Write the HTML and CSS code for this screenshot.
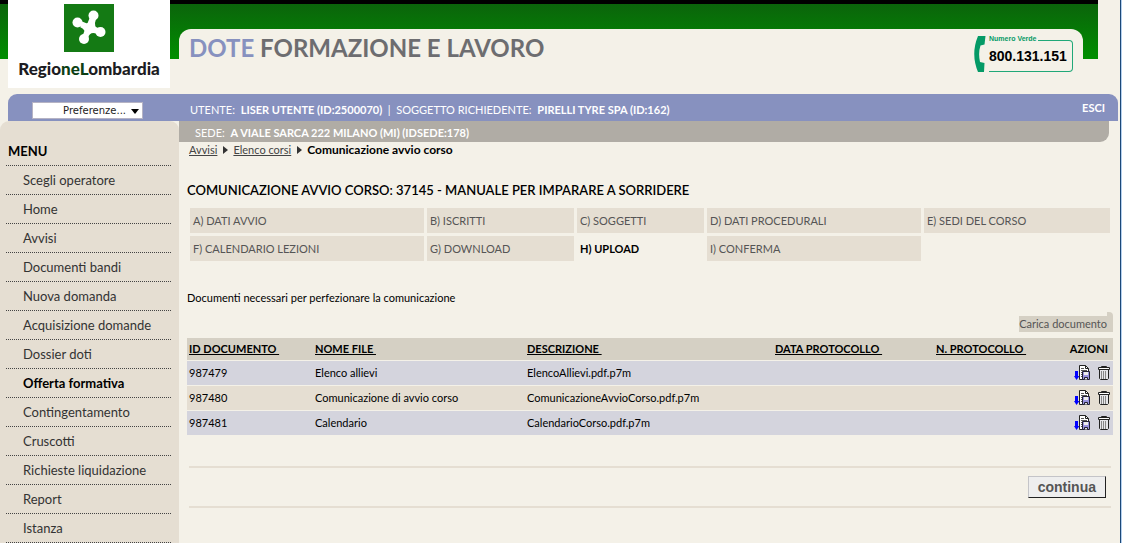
FILE: index.html
```html
<!DOCTYPE html>
<html lang="it">
<head>
<meta charset="utf-8">
<title>Dote Formazione e Lavoro</title>
<link rel="stylesheet" href="styles.css">
</head>
<body>
<svg class="symbols" aria-hidden="true">
  <symbol id="icon-save" viewBox="0 0 17 16">
    <path d="M5.500 14.500V.5h6l3 3v11z" fill="#fff" stroke="#222"/>
    <path d="M11.500.5v3h3" fill="none" stroke="#222"/>
    <path d="M7 3.500h3M7 5.500h6M7 7.500h1M7 9.500h1M7 11.500h1" stroke="#555"/>
    <path d="M8.500 6.500h7v8h-7z" fill="#9a94e0" stroke="#223"/>
    <path d="M10 7h4v3h-4z" fill="#eee"/>
    <path d="M10.500 14.500v-2h3v2" fill="#ddd" stroke="#223"/>
    <path d="M1 6h3v5h1.500L2.500 15 0 11h1z" fill="#00f"/>
  </symbol>
  <symbol id="icon-trash" viewBox="0 0 12 16">
    <path d="M1.500 4.500h9v9l-1 1h-7l-1-1z" fill="#e6e6ea" stroke="#222"/>
    <path d="M.5 2.500h11v2H.5z" fill="#fff" stroke="#222"/>
    <path d="M3.500 2.500v-1h5v1" fill="none" stroke="#222"/>
    <path d="M3.500 6v8M5.500 6v8M7.500 6v8" stroke="#888"/>
  </symbol>
</svg>
<div class="page">
  <header class="header">
    <a class="brand" href="#">
      <svg class="brand-mark" viewBox="0 0 50 48" aria-hidden="true">
        <path d="M0 0h50v48H0z" fill="#147a14"/>
        <g fill="#fff">
          <path d="M29.500 11 20 35M14 18.500l22.500 9" stroke="#fff" stroke-width="5"/>
          <path d="M18 21q7 0 9-8l5 2q-3 8 3 11l-2 4q-7-3-9 4l-4-2q3-6-4-9z"/>
          <circle cx="29.500" cy="11.500" r="5"/><circle cx="13.500" cy="18.500" r="5"/>
          <circle cx="36.500" cy="28" r="5"/><circle cx="20" cy="35" r="5"/>
        </g>
      </svg>
      <span class="brand-name">Regio<span class="brand-accent">neL</span>ombardia</span>
    </a>
    <div class="banner">
      <h1 class="title"><span class="title-accent">DOTE</span> FORMAZIONE E LAVORO</h1>
      <div class="hotline">
        <svg class="handset" viewBox="0 0 12 36" aria-hidden="true">
          <path d="M4 0h7.500l-1 8.500L6.500 9.500Q4 17 6 26l4.500 1-.5 9H4Q-3.500 18 4 0z" fill="#049a66"/>
        </svg>
        <div class="hotline-box">
          <span class="hotline-label">Numero Verde</span>
          <span class="hotline-number">800.131.151</span>
        </div>
      </div>
    </div>
  </header>

  <div class="userbar">
    <div class="prefs">
      <select class="prefs-select" aria-label="Preferenze"><option>Preferenze...</option></select>
      <svg class="prefs-arrow" viewBox="0 0 8 5" aria-hidden="true"><path d="M0 0h8L4 5z"/></svg>
    </div>
    <p class="user">UTENTE: <b class="value">LISER UTENTE (ID:2500070)</b> &nbsp;|&nbsp; SOGGETTO RICHIEDENTE: <b class="value">PIRELLI TYRE SPA (ID:162)</b></p>
    <a class="logout" href="#">ESCI</a>
  </div>

  <div class="body">
    <nav class="menu">
      <h2 class="menu-title">MENU</h2>
      <ul class="menu-list">
        <li><a href="#">Scegli operatore</a></li>
        <li><a href="#">Home</a></li>
        <li><a href="#">Avvisi</a></li>
        <li><a href="#">Documenti bandi</a></li>
        <li><a href="#">Nuova domanda</a></li>
        <li><a href="#">Acquisizione domande</a></li>
        <li><a href="#">Dossier doti</a></li>
        <li><a class="current" href="#">Offerta formativa</a></li>
        <li><a href="#">Contingentamento</a></li>
        <li><a href="#">Cruscotti</a></li>
        <li><a href="#">Richieste liquidazione</a></li>
        <li><a href="#">Report</a></li>
        <li><a href="#">Istanza</a></li>
      </ul>
    </nav>

    <main class="main">
      <p class="site">SEDE: <b class="value">A VIALE SARCA 222 MILANO (MI) (IDSEDE:178)</b></p>
      <div class="content">
        <nav class="crumbs">
          <a href="#">Avvisi</a><span class="sep"></span><a href="#">Elenco corsi</a><span class="sep"></span><b class="here">Comunicazione avvio corso</b>
        </nav>
        <h2 class="heading">COMUNICAZIONE AVVIO CORSO: 37145 - MANUALE PER IMPARARE A SORRIDERE</h2>
        <nav class="steps">
          <a href="#">A) DATI AVVIO</a><a href="#">B) ISCRITTI</a><a href="#">C) SOGGETTI</a><a href="#">D) DATI PROCEDURALI</a><a href="#">E) SEDI DEL CORSO</a>
          <a href="#">F) CALENDARIO LEZIONI</a><a href="#">G) DOWNLOAD</a><a class="current" href="#">H) UPLOAD</a><a href="#">I) CONFERMA</a>
        </nav>
        <p class="intro">Documenti necessari per perfezionare la comunicazione</p>
        <div class="toolbar"><a class="upload" href="#">Carica documento</a></div>
        <table class="docs">
          <thead>
            <tr>
              <th class="col-id"><a href="#">ID DOCUMENTO&nbsp;</a></th>
              <th class="col-file"><a href="#">NOME FILE&nbsp;</a></th>
              <th class="col-desc"><a href="#">DESCRIZIONE&nbsp;</a></th>
              <th class="col-date"><a href="#">DATA PROTOCOLLO&nbsp;</a></th>
              <th class="col-num"><a href="#">N. PROTOCOLLO&nbsp;</a></th>
              <th class="col-actions">AZIONI</th>
            </tr>
          </thead>
          <tbody>
            <tr>
              <td>987479</td><td>Elenco allievi</td><td>ElencoAllievi.pdf.p7m</td><td></td><td></td>
              <td><div class="actions"><button aria-label="Scarica"><svg width="17" height="16"><use href="#icon-save"/></svg></button><button aria-label="Elimina"><svg width="12" height="16"><use href="#icon-trash"/></svg></button></div></td>
            </tr>
            <tr>
              <td>987480</td><td>Comunicazione di avvio corso</td><td>ComunicazioneAvvioCorso.pdf.p7m</td><td></td><td></td>
              <td><div class="actions"><button aria-label="Scarica"><svg width="17" height="16"><use href="#icon-save"/></svg></button><button aria-label="Elimina"><svg width="12" height="16"><use href="#icon-trash"/></svg></button></div></td>
            </tr>
            <tr>
              <td>987481</td><td>Calendario</td><td>CalendarioCorso.pdf.p7m</td><td></td><td></td>
              <td><div class="actions"><button aria-label="Scarica"><svg width="17" height="16"><use href="#icon-save"/></svg></button><button aria-label="Elimina"><svg width="12" height="16"><use href="#icon-trash"/></svg></button></div></td>
            </tr>
          </tbody>
        </table>
        <div class="footer"><button class="continue">continua</button></div>
      </div>
    </main>
  </div>
</div>
</body>
</html>
```

FILE: styles.css
```css
* { box-sizing: border-box; }
html { background: #b4d0ee; }
body {
  margin: 0;
  font: 11px/16px "Trebuchet MS", Lato, "Open Sans", sans-serif;
  color: #000;
}
h1, h2, p, ul { margin: 0; padding: 0; }
a { color: inherit; text-decoration: none; }
button { font: inherit; cursor: pointer; }
.symbols { display: none; }

.page {
  display: flex;
  flex-direction: column;
  min-height: 100vh;
  margin-right: 1px;
  border-right: 1px solid #1c4878;
  background: #f4f1e8;
}

/* Header */
.header {
  display: flex;
  align-items: flex-start;
  height: 94px;
  margin-right: 22px;
  padding: 0 15px 0 8px;
  background:
    linear-gradient(#000, #000) 0 0 / 100% 4px no-repeat,
    linear-gradient(#0b640b, #008f00) 0 4px / 100% 55px no-repeat;
}
.brand {
  display: flex;
  flex-direction: column;
  align-items: center;
  width: 162px;
  height: 88px;
  padding-top: 4px;
  background: #fff;
}
.brand-mark { width: 50px; height: 48px; }
.brand-name {
  margin-top: 7px;
  font: 900 17px/20px Lato, sans-serif;
  color: #1c1c22;
}
.brand-accent { color: #0c4014; }
.banner {
  display: flex;
  flex: 1;
  justify-content: space-between;
  margin: 29px 0 0 9px;
  padding: 3px 10px 0;
  border-radius: 12px 12px 0 0;
  background: #f4f1e8;
}
.title {
  font-size: 24px;
  line-height: 32px;
  color: #6d6d70;
}
.title-accent { color: #8791bf; }
.hotline { display: flex; gap: 3px; padding-top: 4px; }
.handset { width: 12px; height: 36px; }
.hotline-box {
  position: relative;
  width: 84px;
  height: 32px;
  margin-top: 4px;
  border: 1px solid #20a878;
  border-left: 0;
  border-radius: 0 4px 4px 0;
}
.hotline-label {
  position: absolute;
  top: -6px;
  left: 0;
  padding-right: 2px;
  background: #f4f1e8;
  font: bold 7px/8px "Liberation Sans", sans-serif;
  color: #049a66;
}
.hotline-number {
  display: block;
  font: bold 14px/30px "Liberation Sans", sans-serif;
}

/* User bar */
.userbar {
  display: flex;
  height: 27px;
  margin: 0 2px 0 8px;
  padding: 8px 13px 0 24px;
  border-radius: 9px 9px 0 0;
  background: #8791bf;
  color: #fff;
}
.prefs { position: relative; width: 111px; }
.prefs-select {
  display: block;
  width: 100%;
  height: 17px;
  padding: 0 16px 0 0;
  border: 1px solid #b5b3c4;
  border-radius: 0;
  appearance: none;
  background: #fff;
  font: 10px/15px Verdana, "DejaVu Sans", sans-serif;
  text-align-last: right;
  color: #222;
}
.prefs-arrow {
  position: absolute;
  top: 7px;
  right: 4px;
  width: 8px;
  height: 5px;
  pointer-events: none;
}
.user { flex: 1; margin-left: 47px; }
.value { margin-left: 3px; }
.logout { margin-top: -2px; font-weight: bold; }

.body { display: flex; flex: 1; }

/* Side menu */
.menu {
  width: 179px;
  padding: 20px 8px 0 6px;
  border-radius: 9px 9px 0 0;
  background: #e5ded2;
}
.menu-title {
  padding: 0 2px 4px;
  font-size: 13px;
  line-height: 20px;
}
.menu-list { list-style: none; }
.menu-list li { border-top: 1px dotted #444; }
.menu-list li:last-child { border-bottom: 1px dotted #444; }
.menu-list a {
  display: block;
  padding: 5px 0 5px 17px;
  font-size: 13px;
  line-height: 18px;
  color: #333;
}
.menu-list .current { font-weight: bold; color: #000; }

/* Main column */
.main { flex: 1; }
.site {
  height: 21px;
  margin-right: 11px;
  padding: 4px 16px 0;
  border-radius: 0 0 9px 0;
  background: #b0aca5;
  color: #fff;
}
.content { padding: 0 7px 0 8px; }
.crumbs {
  display: flex;
  align-items: center;
  padding: 0 2px;
}
.crumbs a { text-decoration: underline; color: #444; }
.here { font-size: 12px; }
.sep {
  margin: 0 5px 0 6px;
  border: 4px solid transparent;
  border-left: 5px solid #333;
  border-right: 0;
}
.heading {
  padding: 22px 0 8px;
  font-size: 13px;
  font-weight: 600;
  line-height: 20px;
}
.steps {
  display: grid;
  grid-template-columns: 234fr 147fr 127fr 214fr 186fr;
  gap: 3px;
  margin: 0 3px;
}
.steps a {
  padding: 5px 3px 4px;
  background: #e5ded2;
  color: #555;
}
.steps .current { background: none; font-weight: bold; color: #000; }
.intro { padding: 29px 0 10px; }
.toolbar { display: flex; justify-content: flex-end; }
.upload {
  position: relative;
  padding: 0 6px 0 0;
  background: #d5d0c4;
  color: #555;
}
.upload::after {
  content: "";
  position: absolute;
  top: -4px;
  right: 0;
  width: 6px;
  height: 4px;
  border-radius: 0 6px 0 0;
  background: #d5d0c4;
}
.docs {
  width: 100%;
  margin-top: 6px;
  border-collapse: collapse;
  table-layout: fixed;
}
.docs th, .docs td { padding: 0 2px; text-align: left; }
.docs tr { border-bottom: 1px solid #f4f1e8; }
.docs th { height: 22px; background: #d5d0c4; }
.docs td { height: 25px; background: #d4d4dd; }
.docs tbody tr:nth-child(even) td { background: #e5ded2; }
.docs th a { text-decoration: underline; }
.col-id { width: 126px; }
.col-file { width: 212px; }
.col-desc { width: 248px; }
.col-date { width: 161px; }
.docs .col-actions { width: 64px; padding-right: 5px; text-align: right; }
.actions { display: flex; justify-content: flex-end; gap: 7px; }
.actions button {
  display: flex;
  padding: 0;
  border: 0;
  background: none;
}
.docs td:last-child { padding-right: 3px; }
.footer {
  display: flex;
  justify-content: flex-end;
  margin: 30px 2px 0;
  padding: 8px 5px;
  border: solid #e5ded2;
  border-width: 2px 0;
}
.continue {
  padding: 0 9px;
  border: 1px solid;
  border-color: #c4c4c8 #222 #222 #c4c4c8;
  background: #eee;
  font: bold 14px/20px "Liberation Sans", sans-serif;
  color: #555;
}
```
